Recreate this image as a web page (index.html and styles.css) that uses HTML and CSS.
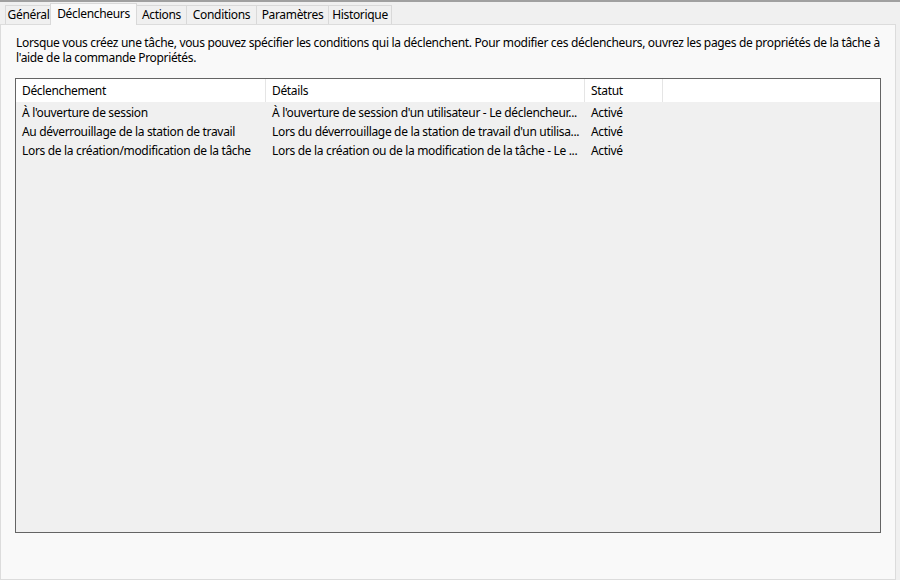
FILE: index.html
```html
<!DOCTYPE html>
<html lang="fr">
<head>
<meta charset="utf-8">
<link rel="stylesheet" href="styles.css">
</head>
<body>
<div class="window">
  <div class="tabs">
    <div class="tab t-gen">Général</div>
    <div class="tab active t-dec">Déclencheurs</div>
    <div class="tab t-act">Actions</div>
    <div class="tab t-con">Conditions</div>
    <div class="tab t-par">Paramètres</div>
    <div class="tab t-his">Historique</div>
  </div>
  <div class="panel">
    <p class="desc">Lorsque vous créez une tâche, vous pouvez spécifier les conditions qui la déclenchent. Pour modifier ces déclencheurs, ouvrez les pages de propriétés de la tâche à l'aide de la commande Propriétés.</p>
    <div class="list">
      <div class="header">
        <div class="hcol c1">Déclenchement</div>
        <div class="hcol c2">Détails</div>
        <div class="hcol c3">Statut</div>
        <div class="hcol c4"></div>
      </div>
      <div class="rows">
        <div class="row">
          <div class="cell c1">À l'ouverture de session</div>
          <div class="cell c2">À l'ouverture de session d'un utilisateur - Le déclencheur...</div>
          <div class="cell c3">Activé</div>
        </div>
        <div class="row">
          <div class="cell c1">Au déverrouillage de la station de travail</div>
          <div class="cell c2">Lors du déverrouillage de la station de travail d'un utilisa...</div>
          <div class="cell c3">Activé</div>
        </div>
        <div class="row">
          <div class="cell c1">Lors de la création/modification de la tâche</div>
          <div class="cell c2">Lors de la création ou de la modification de la tâche - Le ...</div>
          <div class="cell c3">Activé</div>
        </div>
      </div>
    </div>
  </div>
</div>
</body>
</html>
```

FILE: styles.css
```css
* { box-sizing: border-box; }
html, body { margin: 0; padding: 0; }
body {
  width: 900px;
  height: 580px;
  background: #f0f0f0;
  font-family: "Noto Sans", "Open Sans", sans-serif;
  font-size: 12px;
  letter-spacing: -0.33px;
  color: #000;
  overflow: hidden;
}
.window {
  width: 900px;
  height: 580px;
  border-top: 2px solid #a0a0a0;
  display: flex;
  flex-direction: column;
}
.tabs {
  display: flex;
  align-items: flex-end;
  height: 22px;
  padding-left: 5px;
  position: relative;
  z-index: 1;
}
.tab {
  height: 19px;
  line-height: 18px;
  text-align: center;
  background: #f0f0f0;
  border: 1px solid #d9d9d9;
  border-bottom: none;
  margin-right: -1px;
  color: #000;
  white-space: nowrap;
}
.t-gen { width: 47px; }
.t-dec { width: 87px; }
.t-act { width: 51px; }
.t-con { width: 71px; }
.t-par { width: 73px; }
.t-his { width: 64px; }
.tab.active {
  height: 22px;
  margin-bottom: -1px;
  background: #f9f9f9;
  border-color: #d9d9d9;
  line-height: 19px;
  margin-left: -1px;
  margin-right: -1px;
  position: relative;
  z-index: 2;
}
.panel {
  width: 896px;
  height: 556px;
  background: #f9f9f9;
  border: 1px solid #dcdcdc;
  padding: 10px 14px 0 14px;
}
.desc {
  margin: 0 0 0 1px;
  line-height: 15px;
  height: 43px;
  padding-top: 0;
}
.list {
  width: 866px;
  height: 455px;
  border: 1px solid #646464;
  background: #f0f0f0;
}
.header {
  display: flex;
  height: 23px;
  background: #fff;
}
.hcol {
  border-right: 1px solid #e5e5e5;
  padding-left: 6px;
  line-height: 24px;
  white-space: nowrap;
}
.c1 { width: 250px; }
.c2 { width: 319px; }
.c3 { width: 78px; }
.c4 { border-right: none; flex: 1; }
.rows {
  padding-top: 1px;
}
.row {
  display: flex;
  height: 19px;
  line-height: 20px;
}
.cell {
  padding-left: 6px;
  white-space: nowrap;
  overflow: hidden;
}
```
